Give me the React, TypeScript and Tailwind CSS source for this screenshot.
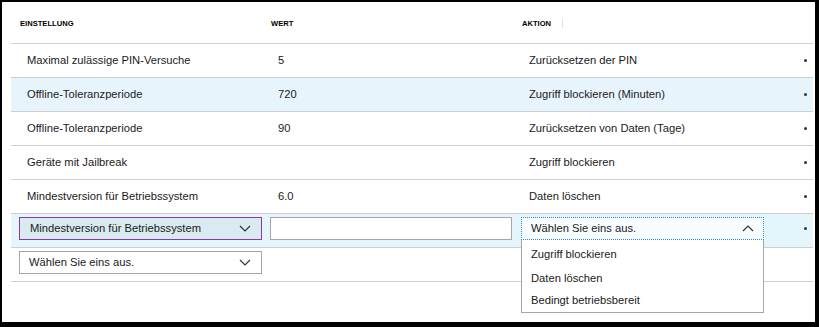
import React from "react";

const font = { fontFamily: '"Liberation Sans", Arial, sans-serif' };

function Chevron({ up = false }: { up?: boolean }) {
  return (
    <svg width="12" height="7" viewBox="0 0 12 7" className="shrink-0">
      <path
        d={up ? "M1 6 L6 1 L11 6" : "M1 1 L6 6 L11 1"}
        fill="none"
        stroke="#333"
        strokeWidth="1.2"
      />
    </svg>
  );
}

function Dot() {
  return <div className="w-[3px] h-[3px] rounded-full bg-[#333]" />;
}

type Row = { name: string; value: string; action: string; hl?: boolean };

const rows: Row[] = [
  { name: "Maximal zulässige PIN-Versuche", value: "5", action: "Zurücksetzen der PIN" },
  { name: "Offline-Toleranzperiode", value: "720", action: "Zugriff blockieren (Minuten)", hl: true },
  { name: "Offline-Toleranzperiode", value: "90", action: "Zurücksetzen von Daten (Tage)" },
  { name: "Geräte mit Jailbreak", value: "", action: "Zugriff blockieren" },
  { name: "Mindestversion für Betriebssystem", value: "6.0", action: "Daten löschen" },
];

export default function App() {
  return (
    <div
      className="w-[819px] h-[327px] bg-white border-black border-l-2 border-t-2 border-r-4 border-b-[5px] text-[#1a1a1a] text-[11.2px] overflow-hidden"
      style={font}
    >
      <div className="ml-[9px] mr-[2px] flex flex-col">
        {/* Header */}
        <div className="h-[42px] border-b border-[#cfcfcf] flex items-center pt-[3px] pl-[9px] text-[7.6px] font-bold text-black">
          <div className="w-[251px]">EINSTELLUNG</div>
          <div className="w-[251px]">WERT</div>
          <div className="flex items-center">
            AKTION
            <div className="ml-[11px] w-px h-[9px] bg-[#cfe8f5]" />
          </div>
        </div>

        {rows.map((r, i) => (
          <div
            key={i}
            className={`h-[34px] border-b border-[#cfcfcf] flex items-center pl-[16px] ${
              r.hl ? "bg-[#e8f4fc]" : ""
            }`}
          >
            <div className="w-[251px]">{r.name}</div>
            <div className="w-[251px]">{r.value}</div>
            <div className="w-[275px]">{r.action}</div>
            <Dot />
          </div>
        ))}

        {/* Editing row */}
        <div className="h-[34px] border-b border-[#cfcfcf] bg-[#e4f5fb] flex items-start pt-[3px] pl-[8px]">
          <div className="w-[243px] h-[23px] border border-[#8a3aa3] bg-[#d9eaf0] flex items-center justify-between pl-[10px] pr-[10px]">
            <span>Mindestversion für Betriebssystem</span>
            <Chevron />
          </div>
          <div className="ml-[8px] w-[242px] h-[23px] border border-[#a6a6a6] bg-white" />
          <div className="relative ml-[9px] w-[243px]">
            <div className="h-[23px] border border-dotted border-[#2a8ad4] bg-[#f7fcfe] flex items-center justify-between pl-[9px] pr-[9px]">
              <span>Wählen Sie eins aus.</span>
              <Chevron up />
            </div>
            <div className="absolute left-0 top-[23px] w-[243px] h-[73px] bg-white border-l border-r border-b border-[#a6a6a6] z-10 flex flex-col pt-[3px] pl-[9px]">
              <div className="h-[24px] flex items-center">Zugriff blockieren</div>
              <div className="h-[23px] flex items-center">Daten löschen</div>
              <div className="h-[23px] flex items-center">Bedingt betriebsbereit</div>
            </div>
          </div>
          <div className="ml-[40px] h-[23px] flex items-center">
            <Dot />
          </div>
        </div>

        {/* New row */}
        <div className="h-[34px] border-b border-[#cfcfcf] flex items-start pt-[3px] pl-[8px]">
          <div className="w-[243px] h-[23px] border border-[#a6a6a6] bg-white flex items-center justify-between pl-[9px] pr-[10px]">
            <span>Wählen Sie eins aus.</span>
            <Chevron />
          </div>
        </div>
      </div>
    </div>
  );
}
